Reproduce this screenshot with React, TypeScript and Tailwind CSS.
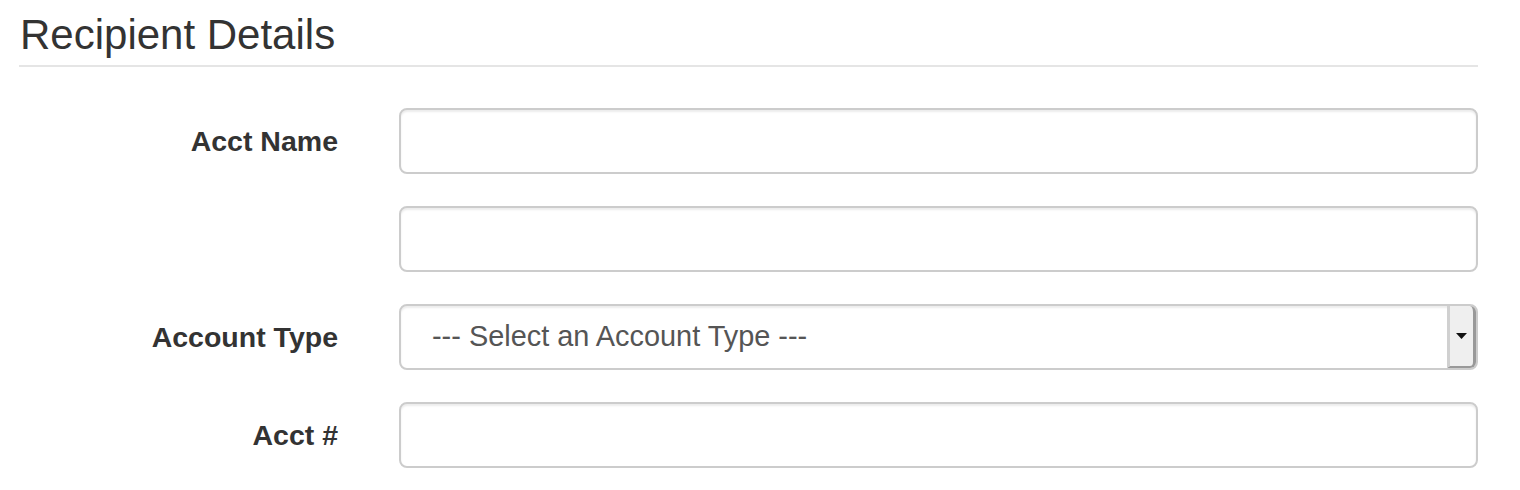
import React from "react";

function Row({ label, children }: { label: string; children: React.ReactNode }) {
  return (
    <div className="flex items-center">
      <div className="w-[319px] shrink-0 text-right text-[28.5px] font-bold text-[#333] leading-none">
        {label}
      </div>
      <div className="ml-[61px] flex-1">{children}</div>
    </div>
  );
}

function Input() {
  return (
    <div className="h-[66px] rounded-[8px] border-2 border-[#cccccc] bg-white shadow-[inset_0_2px_2px_rgba(0,0,0,0.08)]" />
  );
}

export default function App() {
  return (
    <div
      className="bg-white pl-[19px] pr-[42px] pt-[12px] min-h-[490px]"
      style={{ fontFamily: '"Liberation Sans", Arial, sans-serif' }}
    >
      <h3 className="text-[42px] leading-[46px] text-[#333] font-normal pl-px pb-[7px] border-b-2 border-[#e5e5e5]">
        Recipient Details
      </h3>
      <div className="mt-[41px] flex flex-col gap-[32px]">
        <Row label="Acct Name">
          <Input />
        </Row>
        <Row label="">
          <Input />
        </Row>
        <Row label="Account Type">
          <div className="flex h-[66px] items-stretch rounded-[8px] border-2 border-[#cccccc] bg-white shadow-[inset_0_2px_2px_rgba(0,0,0,0.08)]">
            <div className="flex flex-1 items-center pl-[31px] text-[28.9px] text-[#555]">
              --- Select an Account Type ---
            </div>
            <div className="flex w-[29px] items-center justify-center rounded-r-[6px] border-l-[3px] border-r-[3px] border-b-[2px] border-l-[#d0d0d0] border-r-[#999] border-b-[#999] bg-[#efefef]">
              <svg width="11" height="6" viewBox="0 0 11 6">
                <polygon points="0,0 11,0 5.5,6" fill="#111" />
              </svg>
            </div>
          </div>
        </Row>
        <Row label="Acct #">
          <Input />
        </Row>
      </div>
    </div>
  );
}
